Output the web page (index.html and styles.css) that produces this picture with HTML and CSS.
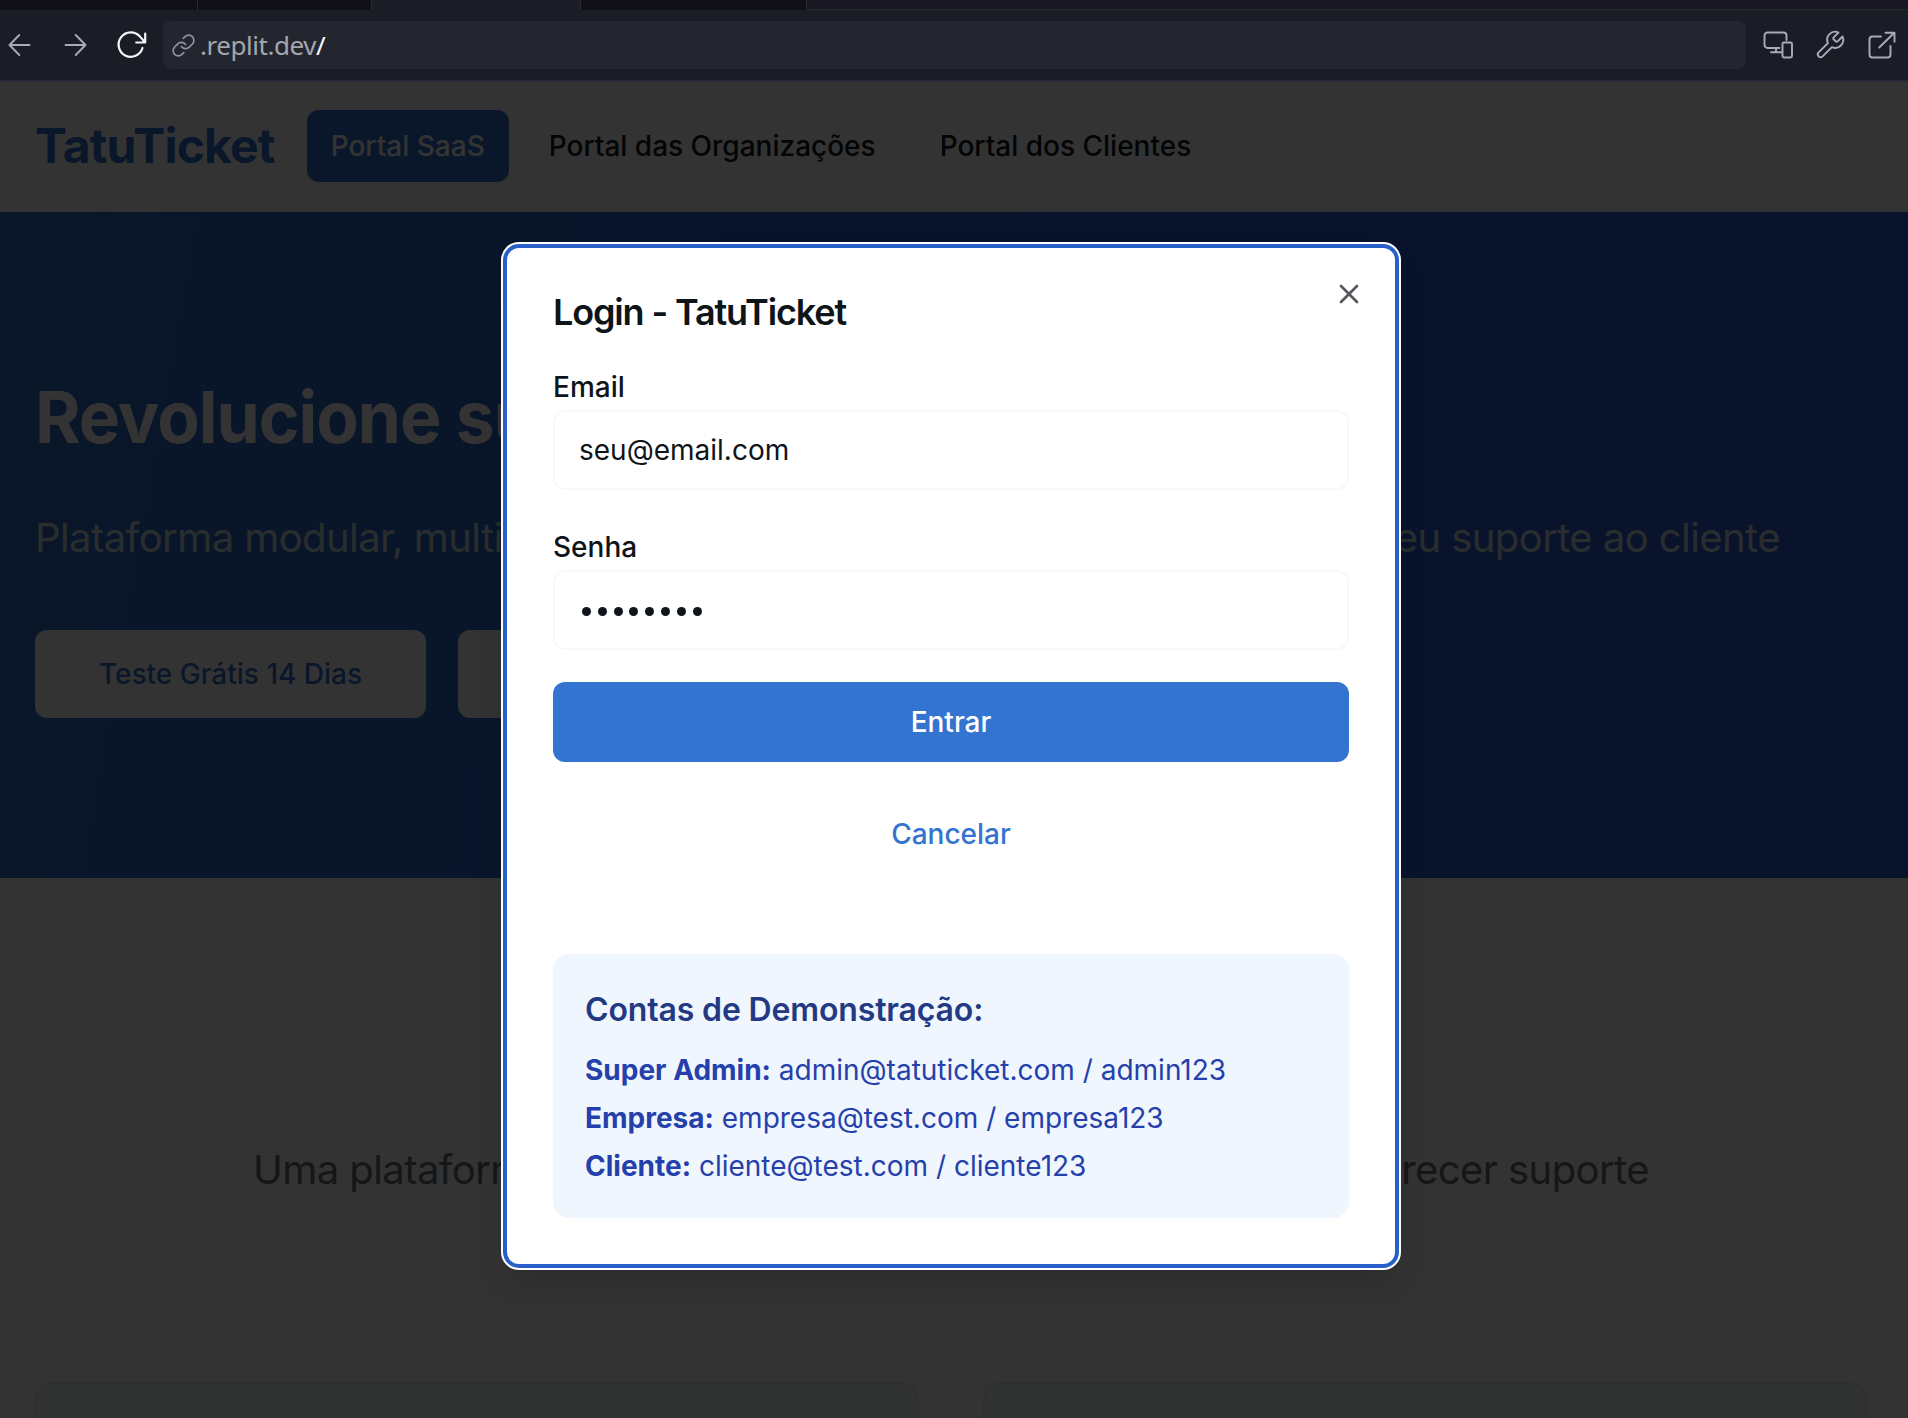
FILE: index.html
```html
<!DOCTYPE html>
<html lang="pt-BR">
<head>
<meta charset="utf-8">
<title>TatuTicket</title>
<link rel="stylesheet" href="styles.css">
</head>
<body>
<div class="tabs">
  <div class="tab tab-a"></div>
  <div class="tab tab-b"></div>
  <div class="tab tab-active"></div>
  <div class="tab tab-c"></div>
  <div class="tab-rest"></div>
</div>
<div class="toolbar">
  <div class="nav-icons">
    <svg class="icon" viewBox="0 0 32 32"><path d="M26.500 16H6.500M16.300 6L6.500 16l9.800 10"/></svg>
    <svg class="icon" viewBox="0 0 32 32"><path d="M6.500 16H26.500M16.700 6L26.500 16l-9.800 10"/></svg>
    <svg class="icon icon-bright" viewBox="0 0 32 32"><path d="M27.500 19A12.200 12.200 0 1 1 25 7.600L30 13.200M30.200 4.500v9h-9"/></svg>
  </div>
  <div class="url">
    <svg class="link" viewBox="0 0 24 24"><path d="M10 13a5 5 0 0 0 7.540.540l3-3a5 5 0 0 0-7.070-7.070l-1.720 1.710M14 11a5 5 0 0 0-7.540-.540l-3 3a5 5 0 0 0 7.070 7.070l1.710-1.710"/></svg>
    <span>.replit.dev</span><span class="slash">/</span>
  </div>
  <div class="tool-icons">
    <svg class="icon" viewBox="0 0 32 32"><path d="M17.500 19H5.500a3 3 0 0 1-3-3V6.500a3 3 0 0 1 3-3h16a3 3 0 0 1 3 3V11M14 19v4M9 23.300h10.500"/><rect x="20.500" y="13.500" width="9.500" height="15" rx="1.500"/></svg>
    <svg class="icon" viewBox="0 0 32 32"><path d="M19.600 8.400a1.330 1.330 0 0 0 0 1.870l2.130 2.130a1.330 1.330 0 0 0 1.870 0l4.900-4.900a8 8 0 0 1-10.600 10.600L8.600 27.400a2.830 2.830 0 0 1-4-4l9.300-9.300A8 8 0 0 1 24.500 3.500l-4.900 4.900z"/></svg>
    <svg class="icon" viewBox="0 0 32 32"><path d="M15 7.500H6.500a3 3 0 0 0-3 3v15a3 3 0 0 0 3 3h15a3 3 0 0 0 3-3V17M13.200 18.500L28 4M19.500 3.700H28.500v9"/></svg>
  </div>
</div>

<div class="viewport">
  <header class="header">
    <div class="logo">TatuTicket</div>
    <nav class="nav">
      <a class="nav-link nav-current">Portal SaaS</a>
      <a class="nav-link">Portal das Organizações</a>
      <a class="nav-link">Portal dos Clientes</a>
    </nav>
  </header>
  <section class="hero">
    <h1>Revolucione su</h1>
    <p class="hero-text"><span>Plataforma modular, multi</span><span>eu suporte ao cliente</span></p>
    <div class="hero-actions">
      <div class="hero-btn">Teste Grátis 14 Dias</div>
      <div class="hero-btn"></div>
    </div>
  </section>
  <section class="features">
    <p class="features-text"><span>Uma plataform</span><span>recer suporte</span></p>
    <div class="cards"><div class="card"></div><div class="card"></div></div>
  </section>

  <div class="overlay">
    <div class="dialog">
      <svg class="close" viewBox="0 0 24 24"><path d="M18 6L6 18M6 6l12 12"/></svg>
      <h2>Login - TatuTicket</h2>
      <label>Email</label>
      <div class="input">seu@email.com</div>
      <label>Senha</label>
      <div class="input password"><i></i><i></i><i></i><i></i><i></i><i></i><i></i><i></i></div>
      <div class="btn btn-primary">Entrar</div>
      <div class="btn btn-link">Cancelar</div>
      <div class="demo">
        <h3>Contas de Demonstração:</h3>
        <div class="accounts">
          <p><strong>Super Admin:</strong> admin@tatuticket.com / admin123</p>
          <p><strong>Empresa:</strong> empresa@test.com / empresa123</p>
          <p><strong>Cliente:</strong> cliente@test.com / cliente123</p>
        </div>
      </div>
    </div>
  </div>
</div>
</body>
</html>
```

FILE: styles.css
```css
* { box-sizing: border-box; margin: 0; padding: 0; }
body {
  width: 1908px;
  height: 1418px;
  overflow: hidden;
  font-family: Inter, "Liberation Sans", sans-serif;
  font-size: 28px;
  color: #0f1419;
  background: #1a1d25;
}
svg { fill: none; stroke-linecap: round; stroke-linejoin: round; display: block; }

/* Browser chrome */
.tabs { display: flex; height: 10px; }
.tab { background: #110f18; border-right: 1px solid #2a2833; }
.tab-a { width: 198px; }
.tab-b { width: 174px; }
.tab-active { width: 209px; background: #1a1d25; }
.tab-c { width: 226px; }
.tab-rest { flex: 1; background: #181620; border-bottom: 1px solid #2a2731; }
.toolbar {
  display: flex;
  align-items: center;
  height: 72px;
  padding: 0 10px 0 3px;
  background: #1a1d25;
  border-bottom: 2px solid #272b38;
}
.nav-icons { display: flex; gap: 24px; width: 160px; }
.icon { width: 32px; height: 32px; stroke: #a9acb6; stroke-width: 1.900; }
.icon-bright { stroke: #f5f5f7; stroke-width: 2.200; }
.url {
  display: flex;
  align-items: center;
  width: 1583px;
  height: 48px;
  padding-left: 8px;
  border-radius: 8px;
  background: #23262f;
  color: #a3a6b1;
  font: 26px/48px "Noto Sans", sans-serif;
  letter-spacing: -0.450px;
}
.link { width: 25px; height: 25px; margin-right: 4px; stroke: #9295a0; stroke-width: 1.600; }
.slash { color: #f5f5f7; }
.tool-icons { display: flex; gap: 20px; margin-left: auto; }

/* Page */
.viewport { position: relative; height: 1336px; background: #fff; overflow: hidden; }
.header {
  display: flex;
  align-items: center;
  gap: 32px;
  height: 130px;
  padding-left: 35px;
  border-bottom: 2px solid #f2f4f5;
}
.logo { position: relative; top: -1px; font-size: 48px; font-weight: 700; letter-spacing: -0.800px; color: #3273cf; }
.nav { display: flex; gap: 16px; }
.nav-link {
  display: flex;
  align-items: center;
  height: 72px;
  padding: 0 24px;
  border-radius: 12px;
  font-weight: 500;
  white-space: nowrap;
}
.nav-current { background: #3273cf; color: #fff; }
.hero {
  height: 666px;
  padding: 160px 35px;
  background: linear-gradient(100deg, #3273c8, #2d5fd7 60%);
}
.hero h1 {
  font-size: 72px;
  line-height: 90px;
  letter-spacing: -1.100px;
  color: #fff;
  transform: scaleX(0.965);
  transform-origin: left;
}
.hero-text {
  display: flex;
  justify-content: space-between;
  width: 1745px;
  margin: 48px 0 64px;
  font-size: 40px;
  line-height: 56px;
  letter-spacing: -0.570px;
  color: #cde0e6;
}
.hero-actions { display: flex; gap: 32px; }
.hero-btn {
  display: flex;
  align-items: center;
  justify-content: center;
  width: 391px;
  height: 88px;
  border-radius: 12px;
  background: #fff;
  color: #3273cf;
  font-weight: 500;
}
.features { padding: 264px 41px 0 35px; }
.features-text {
  display: flex;
  justify-content: space-between;
  width: 1396px;
  margin: 0 auto 184px;
  font-size: 40px;
  line-height: 56px;
  letter-spacing: -0.570px;
  color: #646e78;
}
.cards { display: grid; grid-template-columns: 1fr 1fr; gap: 64px; }
.card { height: 300px; border: 2px solid #e1f0eb; border-radius: 18px; background: #f0fffa; }

/* Login dialog */
.overlay {
  position: absolute;
  inset: 0;
  display: flex;
  align-items: flex-start;
  padding: 160px 0 0 501px;
  background: rgba(0, 0, 0, 0.8);
}
.dialog {
  position: relative;
  width: 900px;
  height: 1028px;
  padding: 50px;
  border: 2px solid #fff;
  border-radius: 18px;
  background: #fff;
  box-shadow: 0 16px 32px -6px rgba(0, 0, 0, 0.15);
}
.dialog::before {
  content: "";
  position: absolute;
  inset: 0;
  border: 4px solid #285fc8;
  border-radius: 16px;
}
.close {
  position: absolute;
  top: 34px;
  right: 34px;
  width: 32px;
  height: 32px;
  stroke: #54575b;
  stroke-width: 2;
}
.dialog h2 { font-size: 36px; line-height: 36px; font-weight: 600; letter-spacing: -1.150px; }
.dialog label { display: block; margin-top: 34px; font-weight: 500; line-height: 46px; }
.input {
  display: flex;
  align-items: center;
  height: 80px;
  padding-left: 24px;
  border: 2px solid #f8f8f9;
  border-radius: 12px;
}
.password { gap: 6.800px; padding: 3px 0 0 27px; }
.password i { width: 9px; height: 9px; border-radius: 50%; background: #0f1419; }
.btn {
  display: flex;
  align-items: center;
  justify-content: center;
  height: 80px;
  margin-top: 32px;
  border-radius: 12px;
  font-weight: 500;
}
.btn-primary { background: #3374d0; color: #fff; }
.btn-link { color: #3374d0; }
.demo { margin-top: 80px; padding: 32px; border-radius: 16px; background: #eff6fe; color: #2540ab; }
.demo h3 { font-size: 32px; line-height: 48px; font-weight: 600; letter-spacing: -0.150px; color: #243984; }
.accounts { display: grid; gap: 8px; margin-top: 16px; line-height: 40px; }
.accounts strong { font-weight: 700; }
```
